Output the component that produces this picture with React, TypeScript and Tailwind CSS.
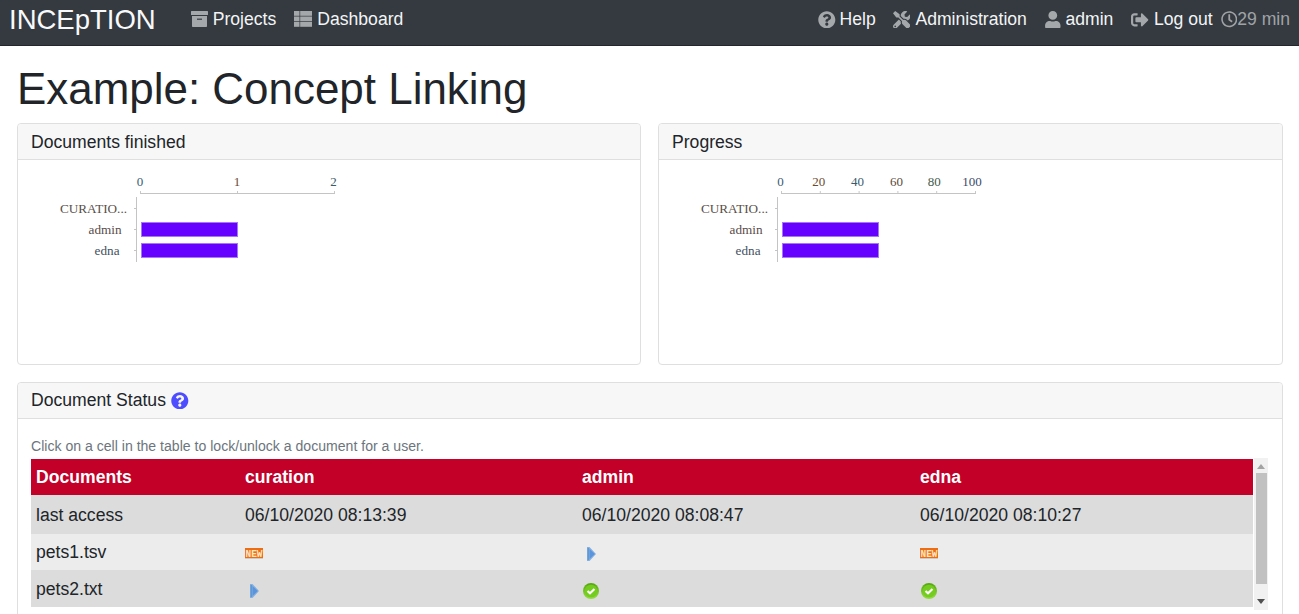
import { FaQuestionCircle, FaTools, FaUser, FaSignOutAlt, FaRegClock } from 'react-icons/fa';

const ArchiveIcon = () => (
  <svg width="17" height="16" viewBox="0 0 17 16" className="block">
    <rect x="0" y="0" width="17" height="4" rx="0.5" fill="#a5a8ab" />
    <path d="M1 5H16V15C16 15.6 15.6 16 15 16H2C1.4 16 1 15.6 1 15Z" fill="#a5a8ab" />
    <rect x="6" y="7.5" width="5" height="1.5" fill="#4c5157" />
  </svg>
);

const TableIcon = () => (
  <svg width="18" height="16" viewBox="0 0 18 16" className="block">
    {[0, 5.5, 11].map((y) => (
      <g key={y} fill="#a5a8ab">
        <rect x="0" y={y} width="5.5" height="4.8" />
        <rect x="6.2" y={y} width="11.8" height="4.8" />
      </g>
    ))}
  </svg>
);

const NavLink = ({ icon, label, className }: { icon: React.ReactNode; label: string; className?: string }) => (
  <a className={`flex items-center text-[#f3f4f5] ${className ?? 'gap-[5px]'}`}>
    <span className="text-[#a5a8ab] text-[17.6px]">{icon}</span>
    <span>{label}</span>
  </a>
);

const BarChart = ({ ticks, offsets }: { ticks: string[]; offsets: number[] }) => {
  const step = 194 / (ticks.length - 1);
  const colors = ['#3b5a73', '#6b4a2f', '#3b5a6b', '#5a4a3a', '#3f5a4a', '#3b4a6b'];
  return (
    <svg width="340" height="105" className="block">
      {ticks.map((t, i) => (
        <g key={t}>
          <text x={122 + i * step + offsets[i]} y={21} textAnchor="middle" fontSize="13" fontFamily="Liberation Serif" fill={colors[i % colors.length]}>{t}</text>
          <line x1={122.5 + i * step} x2={122.5 + i * step} y1={26} y2={29} stroke="#c8c8c8" />
        </g>
      ))}
      <line x1="122" x2="317" y1="28.5" y2="28.5" stroke="#c4c4c4" />
      <line x1="118.5" x2="118.5" y1="32" y2="97" stroke="#c4c4c4" />
      <line x1="116" x2="119" y1="43.5" y2="43.5" stroke="#c4c4c4" />
      <line x1="116" x2="119" y1="64.5" y2="64.5" stroke="#c4c4c4" />
      <line x1="116" x2="119" y1="85.5" y2="85.5" stroke="#c4c4c4" />
      <text x="109" y="48" textAnchor="end" fontSize="13.2" fontFamily="Liberation Serif" fill="#5a4f4a">CURATIO...</text>
      <text x="103.5" y="69" textAnchor="end" fontSize="13.2" fontFamily="Liberation Serif" fill="#5a4a4a">admin</text>
      <text x="101.5" y="90" textAnchor="end" fontSize="13.2" fontFamily="Liberation Serif" fill="#3f4f5f">edna</text>
      <rect x="123.5" y="57.5" width="96" height="14" fill="#6600ff" stroke="#a875f5" strokeWidth="1" />
      <rect x="123.5" y="78.5" width="96" height="14" fill="#6600ff" stroke="#a875f5" strokeWidth="1" />
    </svg>
  );
};

const Card = ({ title, children, className, titleClass }: { title: React.ReactNode; children: React.ReactNode; className?: string; titleClass?: string }) => (
  <div className={`border border-[#dfdfdf] rounded-[4px] bg-white ${className ?? ''}`}>
    <div className={`h-[36px] flex items-center px-[13px] bg-[#f7f7f7] border-b border-[#dfdfdf] rounded-t-[4px] text-[17.6px] text-[#212529] ${titleClass ?? ''}`}>
      {title}
    </div>
    {children}
  </div>
);

const NewBadge = () => (
  <svg width="18" height="11" viewBox="0 0 18 11" className="block mt-[2px]">
    <rect x="0" y="0" width="18" height="10" fill="#ec6d14" />
    <rect x="0" y="10" width="18" height="1" fill="#cfcac4" />
    <text x="9" y="8.6" textAnchor="middle" fontSize="10" fontWeight="bold" fontFamily="Liberation Mono" textLength="17" lengthAdjust="spacingAndGlyphs" fill="#ffe6c2">NEW</text>
  </svg>
);

const PlayIcon = () => (
  <svg width="9" height="14" viewBox="0 0 9 14" className="block mt-[3px] ml-[4.5px]">
    <path d="M0 0H2.5L9 7L2.5 14H0Z" fill="#86b0e0" />
    <path d="M2.5 2L7.8 7L2.5 12Z" fill="#5a94dc" />
    <rect x="0.5" y="1" width="1.6" height="12" fill="#6098d6" />
  </svg>
);

const CheckIcon = () => (
  <svg width="16" height="16" viewBox="0 0 16 16" className="block mt-[3px] ml-[1px]">
    <defs>
      <linearGradient id="checkRim" x1="0" y1="0" x2="0" y2="1">
        <stop offset="0" stopColor="#55a510" />
        <stop offset="1" stopColor="#94de40" />
      </linearGradient>
    </defs>
    <circle cx="8" cy="8" r="8" fill="url(#checkRim)" />
    <circle cx="8" cy="8" r="6.3" fill="#74cc1e" />
    <path d="M4.5 8L7 10.3L11.5 6" fill="none" stroke="#fff" strokeWidth="2.2" />
  </svg>
);

const rows = [
  { name: 'last access', cells: ['06/10/2020 08:13:39', '06/10/2020 08:08:47', '06/10/2020 08:10:27'], h: 'h-[39px]', bg: 'bg-[#dcdcdc]', pad: 'pt-[2px]' },
  { name: 'pets1.tsv', cells: [<NewBadge />, <PlayIcon />, <NewBadge />], h: 'h-[36px]', bg: 'bg-[#ececec]', pad: '' },
  { name: 'pets2.txt', cells: [<PlayIcon />, <CheckIcon />, <CheckIcon />], h: 'h-[37px]', bg: 'bg-[#dcdcdc]', pad: 'pt-[2px]' },
];

export default function App() {
  return (
    <div className="h-screen overflow-hidden bg-white font-['Liberation_Sans',sans-serif] text-[17.6px] text-[#212529]">
      <nav className="h-[46px] bg-[#343a40] border-b border-[#23272b] flex items-center pl-[9px] pr-[9px] pb-[6px]">
        <a className="text-[27.5px] text-[#f8f9fa] leading-none mr-[35px]">INCEpTION</a>
        <div className="flex gap-[18px]">
          <NavLink icon={<ArchiveIcon />} label="Projects" className="gap-[5px]" />
          <NavLink icon={<TableIcon />} label="Dashboard" className="gap-[5px]" />
        </div>
        <div className="ml-auto flex items-center gap-[17px]">
          <NavLink icon={<FaQuestionCircle />} label="Help" className="gap-[4px]" />
          <NavLink icon={<FaTools />} label="Administration" className="gap-[5px]" />
          <NavLink icon={<FaUser />} label="admin" className="gap-[4px] mr-[1px]" />
          <div className="flex items-center gap-[8px]">
            <NavLink icon={<FaSignOutAlt />} label="Log out" />
            <span className="flex items-center text-[#a0a3a6]"><FaRegClock className="text-[16.5px]" />29 min</span>
          </div>
        </div>
      </nav>
      <main className="pl-[17px] pr-[16px] pt-[19px]">
        <h1 className="text-[43.95px] leading-[48px] font-normal text-[#212529] mb-[10px]">Example: Concept Linking</h1>
        <div className="flex gap-[17px] mb-[17px]">
          <Card title="Documents finished" titleClass="pt-[2px]" className="w-[624px] h-[242px]">
            <div className="pt-[5px]"><BarChart ticks={['0', '1', '2']} offsets={[0, 0, -0.5]} /></div>
          </Card>
          <Card title="Progress" titleClass="pt-[2px]" className="flex-1 h-[242px]">
            <div className="pt-[5px]"><BarChart ticks={['0', '20', '40', '60', '80', '100']} offsets={[-0.5, -1, -1, -1, -2, -3]} /></div>
          </Card>
        </div>
        <Card title={<span className="flex items-center gap-[5px]">Document Status <FaQuestionCircle className="text-[#4d4dff]" /></span>}>
          <div className="px-[13px] pt-[16px] pb-[20px]">
            <p className="text-[14.08px] leading-[22px] mb-[2px] text-[#6c757d]">Click on a cell in the table to lock/unlock a document for a user.</p>
            <div className="flex items-start">
              <table className="w-[1222px] table-fixed border-collapse text-left">
                <colgroup>
                  <col className="w-[209px]" />
                  <col className="w-[337px]" />
                  <col className="w-[338px]" />
                  <col className="w-[338px]" />
                </colgroup>
                <thead>
                  <tr className="h-[36px] bg-[#c30028] text-white font-bold">
                    {['Documents', 'curation', 'admin', 'edna'].map((h) => (
                      <th key={h} className="px-[5px] font-bold">{h}</th>
                    ))}
                  </tr>
                </thead>
                <tbody>
                  {rows.map((r) => (
                    <tr key={r.name} className={`${r.h} ${r.bg}`}>
                      <td className={`px-[5px] ${r.pad}`}>{r.name}</td>
                      {r.cells.map((c, i) => (
                        <td key={i} className={`px-[5px] ${r.pad}`}>{c}</td>
                      ))}
                    </tr>
                  ))}
                </tbody>
              </table>
              <div className="w-[14px] ml-[1px] -mt-[1px] h-[152px] bg-[#f1f1f1] flex flex-col items-center">
                <span className="mt-[6px] w-0 h-0 border-x-[4px] border-x-transparent border-b-[5px] border-b-[#a3a3a3]" />
                <span className="mt-[4px] self-end mr-[1px] w-[11px] h-[111px] bg-[#c1c1c1]" />
                <span className="mt-auto mb-[6px] w-0 h-0 border-x-[4px] border-x-transparent border-t-[5px] border-t-[#505050]" />
              </div>
            </div>
          </div>
        </Card>
      </main>
    </div>
  );
}
